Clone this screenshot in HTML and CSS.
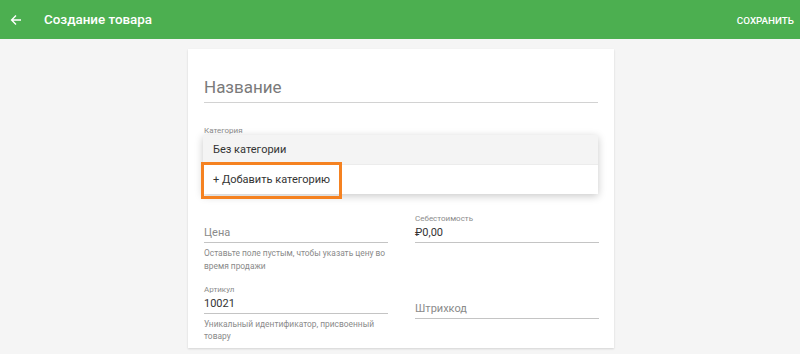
FILE: index.html
```html
<!DOCTYPE html>
<html lang="ru">
<head>
<meta charset="utf-8">
<title>Создание товара</title>
<link rel="stylesheet" href="styles.css">
</head>
<body>
<header class="appbar">
  <div class="appbar-left">
    <svg class="back" width="12" height="12" viewBox="0 0 12 12"><path d="M11 6H1.8M6 1.6L1.6 6 6 10.4" fill="none" stroke="#fff" stroke-width="1.4"/></svg>
    <span class="title">Создание товара</span>
  </div>
  <span class="save">СОХРАНИТЬ</span>
</header>
<main class="page">
  <section class="card">
    <div class="name-input">Название</div>
    <div class="category">
      <div class="label">Категория</div>
      <div class="select"></div>
      <div class="menu">
        <div class="menu-item selected">Без категории</div>
        <div class="menu-item">+ Добавить категорию</div>
        <div class="highlight"></div>
      </div>
    </div>
    <div class="row">
      <div class="field">
        <div class="label"></div>
        <div class="input placeholder">Цена</div>
        <div class="helper">Оставьте поле пустым, чтобы указать цену во время продажи</div>
      </div>
      <div class="field">
        <div class="label">Себестоимость</div>
        <div class="input">₽0,00</div>
      </div>
    </div>
    <div class="row row2">
      <div class="field">
        <div class="label">Артикул</div>
        <div class="input">10021</div>
        <div class="helper">Уникальный идентификатор, присвоенный товару</div>
      </div>
      <div class="field barcode">
        <div class="label"></div>
        <div class="input placeholder">Штрихкод</div>
      </div>
    </div>
  </section>
</main>
</body>
</html>
```

FILE: styles.css
```css
* { box-sizing: border-box; }
html, body { margin: 0; padding: 0; }
body {
  background: #f5f5f5;
  font-family: Roboto, "Noto Sans", sans-serif;
  color: #333;
  width: 800px;
  height: 354px;
  overflow: hidden;
}
.appbar {
  height: 39px;
  background: #4caf50;
  display: flex;
  align-items: center;
  justify-content: space-between;
  padding: 0 6px 0 10px;
  color: #fff;
}
.appbar-left { display: flex; align-items: center; }
.back { margin-top: 1px; }
.title {
  margin-left: 22px;
  font-size: 13.4px;
  font-weight: 500;
}
.save {
  font-size: 9.8px;
  font-weight: 500;
  margin-top: 1px;
}
.page {
  display: flex;
  justify-content: center;
  padding-top: 10px;
  padding-left: 2px;
}
.card {
  width: 426px;
  background: #fff;
  box-shadow: 0 1px 2px rgba(0,0,0,0.14);
  padding: 23px 16px 6px;
}
.name-input {
  height: 31px;
  line-height: 30px;
  font-size: 17px;
  color: #7a7a7a;
  border-bottom: 1px solid #d2d2d2;
}
.label {
  height: 11px;
  line-height: 11px;
  font-size: 8px;
  color: #8c8c8c;
}
.category {
  position: relative;
  margin-top: 22px;
  margin-bottom: 51px;
}
.select {
  height: 26px;
  border-bottom: 1px solid #d2d2d2;
}
.menu {
  position: absolute;
  top: 10px;
  left: -1px;
  right: 0;
  background: #fff;
  box-shadow: 0 2px 8px rgba(0,0,0,0.22);
}
.menu-item {
  height: 29px;
  line-height: 29px;
  padding-left: 10px;
  font-size: 11px;
  color: #333;
}
.menu-item.selected {
  height: 30px;
  background: #f4f4f4;
  border-bottom: 1px solid #ececec;
}
.highlight {
  position: absolute;
  left: -2px;
  top: 27px;
  width: 141px;
  height: 37px;
  border: 3px solid #f58221;
}
.row {
  display: grid;
  grid-template-columns: 184px 184px;
  column-gap: 27px;
  align-items: start;
}
.row2 { margin-top: 11px; }
.input {
  height: 19px;
  line-height: 18px;
  font-size: 11px;
  color: #333;
  border-bottom: 1px solid #c4c4c4;
}
.input.placeholder { color: #8a8a8a; }
.helper {
  margin-top: 4px;
  font-size: 8.4px;
  line-height: 13px;
  color: #8a8a8a;
}
.row2 .helper { line-height: 12px; }
.barcode .input { margin-top: 5px; }
```
